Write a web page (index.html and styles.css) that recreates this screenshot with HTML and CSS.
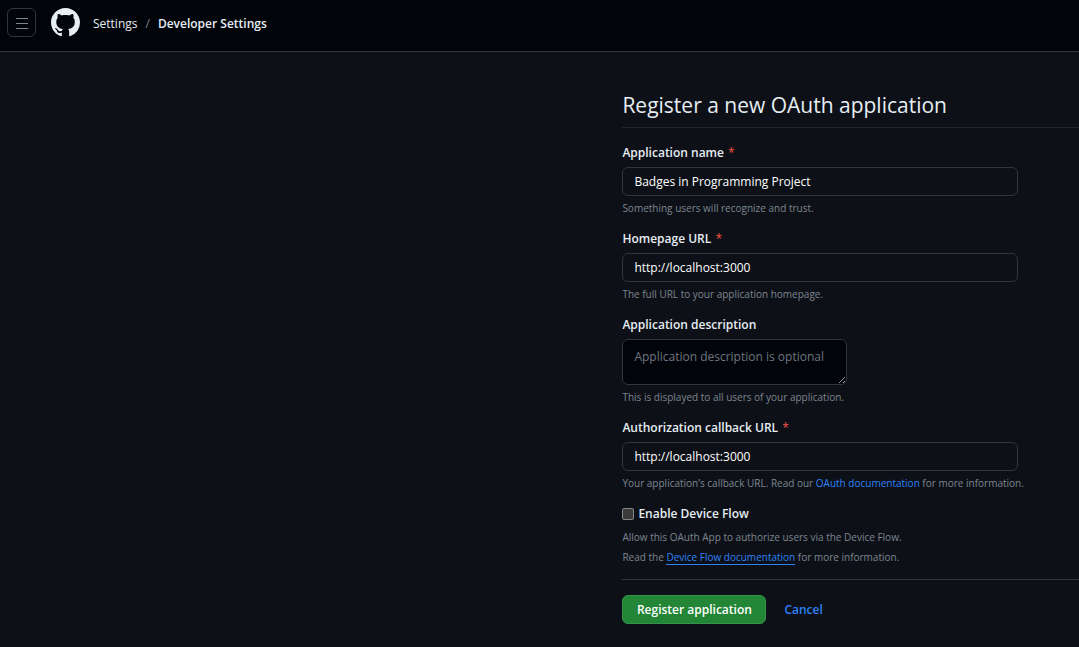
FILE: index.html
```html
<!DOCTYPE html>
<html lang="en">
<head>
<meta charset="utf-8">
<meta name="viewport" content="width=device-width, initial-scale=1">
<title>Register a new OAuth application</title>
<link rel="stylesheet" href="styles.css">
</head>
<body>
<header class="topbar">
  <button class="menu-button" type="button" aria-label="Open menu">
    <svg width="17" height="17" viewBox="0 0 17 17" fill="none" stroke="currentColor" aria-hidden="true"><path d="M3 5.5h12M3 10.5h12M3 15.5h12"/></svg>
  </button>
  <a class="logo" href="#" aria-label="Home">
    <svg width="29" height="29" viewBox="0 0 16 16" fill="currentColor" aria-hidden="true"><path d="M8 0C3.58 0 0 3.58 0 8c0 3.54 2.29 6.53 5.47 7.59.4.07.55-.17.55-.38 0-.19-.01-.82-.01-1.49-2.01.37-2.53-.49-2.69-.94-.09-.23-.48-.94-.82-1.13-.28-.15-.68-.52-.01-.53.63-.01 1.08.58 1.23.82.72 1.21 1.87.87 2.33.66.07-.52.28-.87.51-1.07-1.78-.2-3.64-.89-3.64-3.95 0-.87.31-1.59.82-2.15-.08-.2-.36-1.02.08-2.12 0 0 .67-.21 2.2.82.64-.18 1.32-.27 2-.27s1.36.09 2 .27c1.53-1.04 2.2-.82 2.2-.82.44 1.1.16 1.92.08 2.12.51.56.82 1.27.82 2.15 0 3.07-1.87 3.75-3.65 3.95.29.25.54.73.54 1.48 0 1.07-.01 1.93-.01 2.2 0 .21.15.46.55.38A8.01 8.01 0 0 0 16 8c0-4.42-3.58-8-8-8Z"/></svg>
  </a>
  <nav class="crumbs" aria-label="Breadcrumb">
    <a href="#">Settings</a>
    <span class="crumb-slash">/</span>
    <a class="crumb-current" href="#">Developer Settings</a>
  </nav>
</header>
<main class="page">
  <h1 class="title">Register a new OAuth application</h1>
  <form class="form">
    <div class="field">
      <label class="label" for="name">Application name <span class="required">*</span></label>
      <input class="control" id="name" type="text" value="Badges in Programming Project">
      <p class="note">Something users will recognize and trust.</p>
    </div>
    <div class="field">
      <label class="label" for="home">Homepage URL <span class="required">*</span></label>
      <input class="control" id="home" type="text" value="http://localhost:3000">
      <p class="note">The full URL to your application homepage.</p>
    </div>
    <div class="field">
      <label class="label" for="desc">Application description</label>
      <textarea class="control control-area" id="desc" placeholder="Application description is optional"></textarea>
      <p class="note">This is displayed to all users of your application.</p>
    </div>
    <div class="field">
      <label class="label" for="callback">Authorization callback URL <span class="required">*</span></label>
      <input class="control" id="callback" type="text" value="http://localhost:3000">
      <p class="note">Your application’s callback URL. Read our <a class="link" href="#">OAuth documentation</a> for more information.</p>
    </div>
    <div class="device">
      <div class="check-row">
        <input class="check" id="device" type="checkbox">
        <label class="label" for="device">Enable Device Flow</label>
      </div>
      <p class="note">Allow this OAuth App to authorize users via the Device Flow.</p>
      <p class="note">Read the <a class="link link-underlined" href="#">Device Flow documentation</a> for more information.</p>
    </div>
    <div class="actions">
      <button class="submit" type="submit">Register application</button>
      <a class="link cancel" href="#">Cancel</a>
    </div>
  </form>
</main>
</body>
</html>
```
FILE: styles.css
```css
* {
  box-sizing: border-box;
}

body {
  margin: 0;
  background: #0d1117;
  color: #e6edf3;
  font-family: "Segoe UI", "Open Sans", "Noto Sans", sans-serif;
  font-size: 13px;
  line-height: 20px;
}

a {
  color: inherit;
  text-decoration: none;
}

.topbar {
  display: flex;
  align-items: flex-start;
  height: 52px;
  padding: 8px 7px;
  background: #010409;
  border-bottom: 1px solid #30363d;
}

.menu-button {
  display: grid;
  place-items: center;
  width: 29px;
  height: 29px;
  padding: 0;
  background: transparent;
  border: 1px solid #30363d;
  border-radius: 6px;
  color: #7d8590;
}

.menu-button svg {
  margin-bottom: 2px;
}

.logo {
  display: flex;
  margin-left: 15px;
}

.crumbs {
  display: flex;
  gap: 8px;
  margin-left: 13px;
  padding-top: 6px;
  font-size: 12px;
}

.crumb-slash {
  color: #7d8590;
}

.crumb-current {
  font-weight: 600;
}

.page {
  padding: 36px 0 24px;
  margin-left: calc(60% - 25px);
}

.title {
  margin: 0 0 15px;
  padding: 2px 0 7px;
  border-bottom: 1px solid #21262d;
  font-size: 21px;
  font-weight: 400;
  line-height: 30px;
}

.field {
  margin-bottom: 12px;
}

.label {
  display: block;
  font-size: 12px;
  font-weight: 600;
}

.required {
  margin-left: 1px;
  color: #f85149;
  font-weight: 400;
}

.control {
  display: block;
  width: 396px;
  max-width: 100%;
  height: 29px;
  margin: 4px 0 3px;
  padding: 4px 11px;
  background: #0d1117;
  border: 1px solid #30363d;
  border-radius: 6px;
  color: #ffffff;
  font-family: inherit;
  font-size: 12px;
  line-height: 19px;
}

.control-area {
  width: 225px;
  height: 46px;
  padding-top: 7px;
  background: #010409;
  resize: both;
  overflow: hidden;
}

.control::placeholder {
  color: #6e7681;
  opacity: 1;
}

.note {
  margin: 0;
  color: #7d8590;
  font-size: 10px;
  line-height: 18px;
}

.link {
  color: #2f81f7;
}

.link-underlined {
  border-bottom: 1px solid #2f81f7;
}

.device {
  padding-bottom: 12px;
  border-bottom: 1px solid #30363d;
}

.device .note {
  line-height: 20px;
}

.check-row {
  display: flex;
  align-items: center;
  gap: 4px;
  margin-bottom: 3px;
}

.check {
  appearance: none;
  width: 12px;
  height: 12px;
  margin: 0;
  background: #3b3b3b;
  border: 1px solid #858585;
  border-radius: 2px;
}

.actions {
  display: flex;
  align-items: center;
  gap: 18px;
  padding-top: 15px;
}

.submit {
  min-width: 144px;
  height: 29px;
  padding: 0 12px;
  background: #238636;
  border: 1px solid #36924a;
  border-radius: 6px;
  color: #ffffff;
  font-family: inherit;
  font-size: 12px;
  font-weight: 600;
}

.cancel {
  font-size: 12px;
  font-weight: 600;
}
```
